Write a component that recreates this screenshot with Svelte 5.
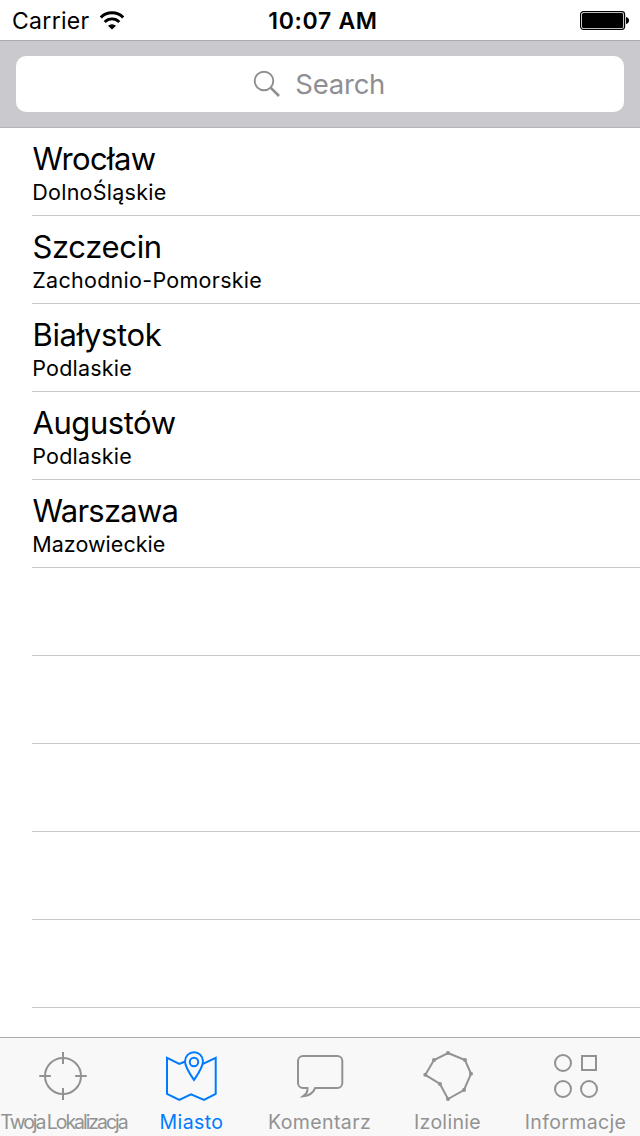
<script>
  const cities = [
    { name: 'Wrocław', region: 'DolnoŚląskie', ns: -0.6, rs: 0.25 },
    { name: 'Szczecin', region: 'Zachodnio-Pomorskie', ns: -0.35, rs: 0.28 },
    { name: 'Białystok', region: 'Podlaskie', ns: -0.35, rs: 0.2 },
    { name: 'Augustów', region: 'Podlaskie', ns: -0.45, rs: 0.2 },
    { name: 'Warszawa', region: 'Mazowieckie', ns: -0.75, rs: 0.03 }
  ];
  const emptyRows = [1, 2, 3, 4, 5];
  const tabs = [
    { id: 'location', label: 'Twoja Lokalizacja', ls: -2.05 },
    { id: 'city', label: 'Miasto', ls: 0.4 },
    { id: 'comment', label: 'Komentarz', ls: 0.4 },
    { id: 'isoline', label: 'Izolinie', ls: 0.3 },
    { id: 'info', label: 'Informacje', ls: 0.35 }
  ];
  const points = [[32, 9], [49, 16], [55, 29.8], [48, 46], [32, 55], [24, 40], [9.3, 30.8], [18, 16]];
  let active = $state('city');
</script>

<div class="screen">
  <header class="status">
    <div class="carrier">
      <span>Carrier</span>
      <svg width="26" height="20" viewBox="0 0 26 20">
        <path d="M1.8 6.5a15.8 15.8 0 0 1 22.4 0" fill="none" stroke="#000" stroke-width="3" />
        <path d="M5.7 10.9a10.3 10.3 0 0 1 14.6 0" fill="none" stroke="#000" stroke-width="2.9" />
        <path d="M13 18.6 9 14.8a5.8 5.8 0 0 1 8 0z" />
      </svg>
    </div>
    <span class="time">10:07 AM</span>
    <svg class="battery" width="50" height="20" viewBox="0 0 50 20">
      <rect x="0.6" y="0.6" width="44" height="17.8" rx="2.8" fill="none" stroke="#000" stroke-width="1.2" />
      <rect x="2" y="2" width="41.2" height="15" rx="1.5" />
      <path d="M46 6q3 .6 3 3.5t-3 3.5z" />
    </svg>
  </header>

  <div class="searchbar">
    <div class="field">
      <svg width="28" height="28" viewBox="0 0 28 28" fill="none" stroke="#8e8e93">
        <circle cx="11" cy="11" r="9.3" stroke-width="1.9" />
        <path d="M17.6 17.6 26 26" stroke-width="2.7" />
      </svg>
      <span>Search</span>
    </div>
  </div>

  <main>
    {#each cities as city}
      <div class="row">
        <div class="name" style="letter-spacing: {city.ns}px">{city.name}</div>
        <div class="region" style="letter-spacing: {city.rs}px">{city.region}</div>
      </div>
    {/each}
    {#each emptyRows as n (n)}
      <div class="row"></div>
    {/each}
  </main>

  <nav>
    {#each tabs as tab}
      <button class:active={active === tab.id} onclick={() => (active = tab.id)}>
        <svg width="64" height="64" viewBox="0 0 64 64" fill="none" stroke="currentColor" stroke-width="2">
          {#if tab.id === 'location'}
            <circle cx="31" cy="32" r="18" />
            <path d="M31 8v12M31 44v12M7.3 32h11.5M43.2 32h11.5" />
          {:else if tab.id === 'city'}
            <path d="M25.2 17.5 19.3 20 7 13.8V50l12.3 6L31 50.3 44 56l11.7-6V13.8L43 19.8" />
            <path d="M34 36C30 30 25 23 25 17.2a9 9 0 0 1 18 0C43 23 38 30 34 36z" />
            <circle cx="34" cy="18" r="4.2" />
          {:else if tab.id === 'comment'}
            <path d="M15 12H49.3a5 5 0 0 1 5 5V39a5 5 0 0 1-5 5H27.2Q24 51.5 15.2 52.2Q20 49 19.5 44H15a5 5 0 0 1-5-5V17a5 5 0 0 1 5-5z" />
          {:else if tab.id === 'isoline'}
            <polygon points={points.map((p) => p.join(',')).join(' ')} />
            {#each points as p}
              <circle cx={p[0]} cy={p[1]} r="2" fill="currentColor" stroke="none" />
            {/each}
          {:else}
            <circle cx="19" cy="19" r="8" />
            <rect x="38" y="12" width="14" height="14" />
            <circle cx="19" cy="45" r="8" />
            <circle cx="45" cy="45" r="8" />
          {/if}
        </svg>
        <span style="letter-spacing: {tab.ls}px">{tab.label}</span>
      </button>
    {/each}
  </nav>
</div>

<style>
  .screen {
    width: 640px;
    height: 1136px;
    display: flex;
    flex-direction: column;
    overflow: hidden;
    background: #fff;
    color: #000;
    font-family: Inter, 'Liberation Sans', sans-serif;
    box-sizing: border-box;
  }
  .status {
    height: 40px;
    flex: none;
    box-sizing: border-box;
    display: grid;
    grid-template-columns: 1fr auto 1fr;
    align-items: center;
    padding: 1px 10px 0 12px;
    font-size: 23px;
    line-height: 38px;
  }
  .carrier {
    display: flex;
    align-items: center;
    gap: 9px;
    letter-spacing: 0.3px;
  }
  .carrier span,
  .time {
    padding-top: 1px;
  }
  .time {
    font-weight: 600;
    padding-left: 4px;
    letter-spacing: 0.7px;
  }
  .battery {
    justify-self: end;
  }
  .searchbar {
    height: 88px;
    flex: none;
    box-sizing: border-box;
    padding: 15px 16px;
    background: #c9c9ce;
    border-top: 1px solid #acacb0;
    border-bottom: 1px solid #b4b4b8;
  }
  .field {
    height: 56px;
    box-sizing: border-box;
    padding-right: 2px;
    border-radius: 10px;
    background: #fff;
    color: #8e8e93;
    display: flex;
    align-items: center;
    justify-content: center;
    gap: 14.5px;
    font-size: 27.5px;
  }
  .field span {
    letter-spacing: -0.25px;
    padding-bottom: 1px;
  }
  main {
    flex: 1;
    min-height: 0;
    overflow: hidden;
  }
  .row {
    height: 88px;
    box-sizing: border-box;
    margin-left: 32px;
    padding-top: 12px;
    border-bottom: 1px solid #c8c7cc;
    white-space: nowrap;
  }
  .name {
    padding-left: 0.5px;
    font-size: 31px;
    line-height: 38px;
  }
  .region {
    padding-left: 0.3px;
    font-size: 21.5px;
    line-height: 28px;
  }
  nav {
    height: 99px;
    flex: none;
    box-sizing: border-box;
    display: grid;
    grid-template-columns: repeat(5, 128px);
    background: #f8f8f8;
    border-top: 1px solid #acacac;
  }
  button {
    border: 0;
    margin: 0;
    padding: 6px 0 0;
    background: none;
    font: inherit;
    font-size: 19.5px;
    line-height: 28px;
    color: #929292;
    display: flex;
    flex-direction: column;
    align-items: center;
    white-space: nowrap;
  }
  button svg {
    flex: none;
  }
  button span {
    padding-right: 1px;
    word-spacing: -1px;
  }
  .active {
    color: #007aff;
  }
</style>
